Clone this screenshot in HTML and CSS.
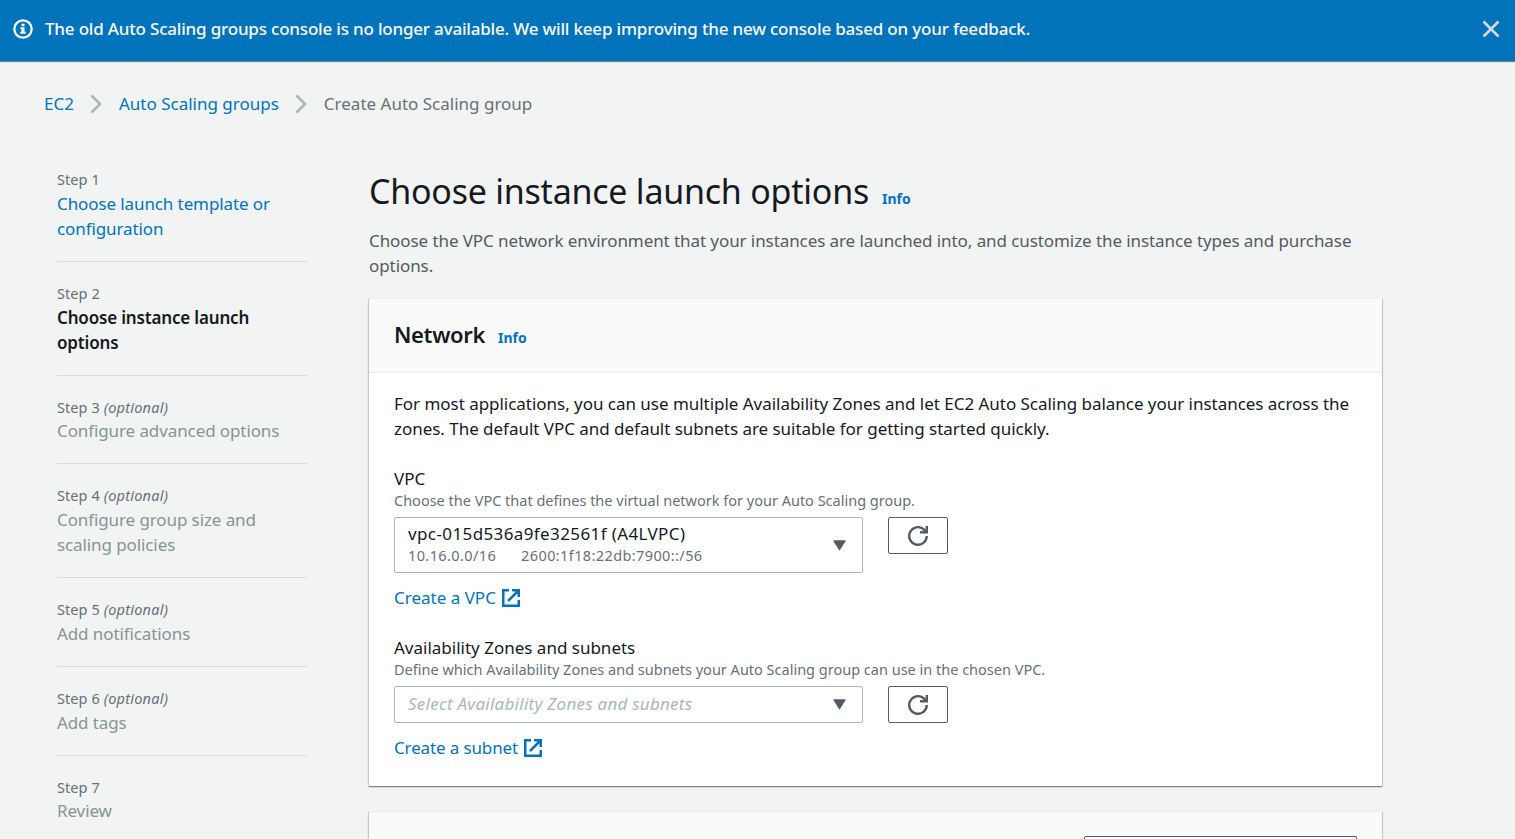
FILE: index.html
```
<!DOCTYPE html>
<html lang="en">
<head>
<meta charset="utf-8">
<title>Create Auto Scaling group</title>
<link rel="stylesheet" href="styles.css">
</head>
<body>
<svg class="defs" width="0" height="0" aria-hidden="true">
  <symbol id="external" viewBox="0 0 18 18"><path d="M7 1.25H1.25v15.5h15.5V11M10 1.25h6.75V8M16.5 1.5 6 12" fill="none" stroke="currentColor" stroke-width="2.5"/></symbol>
  <symbol id="refresh" viewBox="0 0 20 20"><path d="M18.8 10a8.8 8.8 0 1 1-3.2-6.8l2 2.4" fill="none" stroke="currentColor" stroke-width="2.4"/><path d="M18.8 0v6.2H12" fill="none" stroke="currentColor" stroke-width="2.4"/></symbol>
  <symbol id="chevron" viewBox="0 0 12 20"><path d="M1.5 1.5 10 10l-8.5 8.5" fill="none" stroke="currentColor" stroke-width="2.6"/></symbol>
  <symbol id="caret" viewBox="0 0 13 11"><path d="M1 .9h11L6.5 9.8z" fill="currentColor" stroke="currentColor" stroke-width="1.2" stroke-linejoin="round"/></symbol>
</svg>
<header class="banner">
  <svg class="banner-icon" viewBox="0 0 20 20"><circle cx="10" cy="10" r="8.7" fill="none" stroke="#fff" stroke-width="2.2"/><path d="M8.5 4.8h3v2.500h-3zM7.500 8.300h4v4.500h1.200v2H7.300v-2h1.200v-2.500h-1z" fill="#fff"/></svg>
  <span class="banner-text">The old Auto Scaling groups console is no longer available. We will keep improving the new console based on your feedback.</span>
  <svg class="close" viewBox="0 0 18 18"><path d="M1.500 1.500l15 15M16.500 1.500l-15 15" stroke="#d5dbdb" stroke-width="2.600"/></svg>
</header>
<nav class="crumbs">
  <a>EC2</a>
  <svg class="chevron"><use href="#chevron"/></svg>
  <a>Auto Scaling groups</a>
  <svg class="chevron"><use href="#chevron"/></svg>
  <span>Create Auto Scaling group</span>
</nav>
<div class="layout">
  <aside class="steps">
    <div class="step"><div class="step-label">Step 1</div><div class="step-title link">Choose launch template or configuration</div></div>
    <div class="step"><div class="step-label">Step 2</div><div class="step-title current">Choose instance launch options</div></div>
    <div class="step"><div class="step-label">Step 3 <i>(optional)</i></div><div class="step-title">Configure advanced options</div></div>
    <div class="step"><div class="step-label">Step 4 <i>(optional)</i></div><div class="step-title">Configure group size and scaling policies</div></div>
    <div class="step"><div class="step-label">Step 5 <i>(optional)</i></div><div class="step-title">Add notifications</div></div>
    <div class="step"><div class="step-label">Step 6 <i>(optional)</i></div><div class="step-title">Add tags</div></div>
    <div class="step"><div class="step-label">Step 7</div><div class="step-title">Review</div></div>
  </aside>
  <main class="main">
    <div class="title-row"><h1>Choose instance launch options</h1><a class="info">Info</a></div>
    <p class="desc">Choose the VPC network environment that your instances are launched into, and customize the instance types and purchase options.</p>
    <section class="card">
      <div class="card-head"><h2>Network</h2><a class="info">Info</a></div>
      <div class="card-body">
        <p class="intro">For most applications, you can use multiple Availability Zones and let EC2 Auto Scaling balance your instances across the zones. The default VPC and default subnets are suitable for getting started quickly.</p>
        <div class="field">
          <div class="label">VPC</div>
          <div class="hint">Choose the VPC that defines the virtual network for your Auto Scaling group.</div>
          <div class="control">
            <div class="select tall">
              <div><div class="value">vpc-015d536a9fe32561f (A4LVPC)</div><div class="tags"><span>10.16.0.0/16</span><span>2600:1f18:22db:7900::/56</span></div></div>
              <svg class="caret"><use href="#caret"/></svg>
            </div>
            <button class="refresh" aria-label="Refresh"><svg><use href="#refresh"/></svg></button>
          </div>
          <a class="create">Create a VPC <svg><use href="#external"/></svg></a>
        </div>
        <div class="field">
          <div class="label">Availability Zones and subnets</div>
          <div class="hint">Define which Availability Zones and subnets your Auto Scaling group can use in the chosen VPC.</div>
          <div class="control">
            <div class="select"><div class="placeholder">Select Availability Zones and subnets</div><svg class="caret"><use href="#caret"/></svg></div>
            <button class="refresh" aria-label="Refresh"><svg><use href="#refresh"/></svg></button>
          </div>
          <a class="create subnet">Create a subnet <svg><use href="#external"/></svg></a>
        </div>
      </div>
    </section>
    <section class="card next"><div class="action"></div></section>
  </main>
</div>
</body>
</html>
```
FILE: styles.css
```
* { box-sizing: border-box; }
body {
  margin: 0;
  height: 839px;
  overflow: hidden;
  background: #f2f3f3;
  color: #16191f;
  font: 17px/25px "Noto Sans", "Open Sans", sans-serif;
}
h1, h2, p { margin: 0; }
svg { display: block; flex: none; }
.defs { position: absolute; }
a, .step-title.link { color: #0073bb; }

.banner {
  display: flex;
  align-items: center;
  height: 61px;
  padding: 0 15px 4px 13px;
  background: #0073bb;
  color: #fafafa;
  box-shadow: 0 1px 1px rgba(0, 28, 36, .5);
}
.banner-icon { width: 20px; height: 20px; }
.banner-text { margin-left: 12px; font-weight: 500; letter-spacing: -.19px; white-space: nowrap; }
.close { width: 18px; height: 18px; margin-left: auto; }

.crumbs {
  display: flex;
  align-items: center;
  height: 25px;
  margin: 30px 0 0 44px;
  color: #687078;
}
.chevron { width: 12px; height: 20px; margin: 0 17px 0 16px; color: #aab7b8; }

.layout { display: flex; gap: 62px; margin: 32px 0 0 57px; }
.steps { width: 250px; flex: none; }
.step { padding: 20px 0; border-bottom: 1px solid #d5dbdb; }
.step:last-child { border: 0; padding-bottom: 0; }
.step-label { height: 22.75px; line-height: 22px; font-size: 14.5px; letter-spacing: .08px; color: #687078; }
.step-label i { letter-spacing: .24px; }
.step-title { color: #879596; letter-spacing: -.1px; }
.step-title.current { color: #16191f; font-weight: 600; letter-spacing: -.17px; }

.main { width: 1013px; padding-top: 21px; }
.title-row { display: flex; align-items: baseline; height: 44px; }
h1 { font-size: 34px; line-height: 44px; font-weight: 400; letter-spacing: -.24px; }
.info { margin-left: 13px; font-size: 14px; font-weight: 700; }
.desc { margin-top: 15px; color: #545b64; letter-spacing: -.08px; }

.card {
  margin-top: 20px;
  height: 488px;
  background: #fff;
  border-top: 1px solid #eaeded;
  box-shadow: 0 1px 1px 0 rgba(0, 28, 36, .3), 1px 1px 1px 0 rgba(0, 28, 36, .15), -1px 1px 1px 0 rgba(0, 28, 36, .15);
}
.card-head {
  display: flex;
  align-items: baseline;
  height: 74px;
  padding: 20px 25px 0;
  background: #fafafa;
  border-bottom: 1px solid #eaeded;
}
h2 { font-size: 22px; line-height: 30px; font-weight: 600; letter-spacing: -.37px; }
.card-body { padding: 18px 25px 0; }
.intro { letter-spacing: -.03px; }
.field { margin-top: 25px; }
.hint { height: 20px; line-height: 18px; font-size: 14.5px; color: #687078; white-space: nowrap; }
.control { display: flex; gap: 25px; margin-top: 6px; }
.select {
  display: flex;
  align-items: center;
  justify-content: space-between;
  width: 469px;
  height: 37px;
  padding: 0 16px 0 13px;
  border: 1px solid #aab7b8;
  border-radius: 2px;
}
.select.tall { height: 56px; }
.value { line-height: 22px; letter-spacing: .39px; }
.tags { display: flex; gap: 25px; padding-bottom: 2px; line-height: 21px; font-size: 14.5px; letter-spacing: .39px; color: #687078; }
.placeholder { padding-bottom: 2px; color: #aab7b8; font-style: italic; letter-spacing: .25px; }
.caret { width: 13px; height: 11px; color: #545b64; }
.refresh {
  display: flex;
  align-items: center;
  justify-content: center;
  width: 60px;
  height: 37px;
  padding: 0;
  background: #fff;
  border: 1px solid #545b64;
  border-radius: 2px;
  color: #545b64;
}
.refresh svg { width: 20px; height: 20px; }
.create { display: flex; align-items: center; gap: 6px; height: 25px; margin-top: 12px; }
.create svg { width: 18px; height: 18px; }
.create.subnet { letter-spacing: -.13px; }
.card.next { margin-top: 25px; padding: 24px 25px 0; height: 28px; background: #fafafa; }
.action { width: 273px; height: 3px; margin-left: auto; border: 1px solid #545b64; border-bottom: 0; border-radius: 2px 2px 0 0; background: #fff; }
```
